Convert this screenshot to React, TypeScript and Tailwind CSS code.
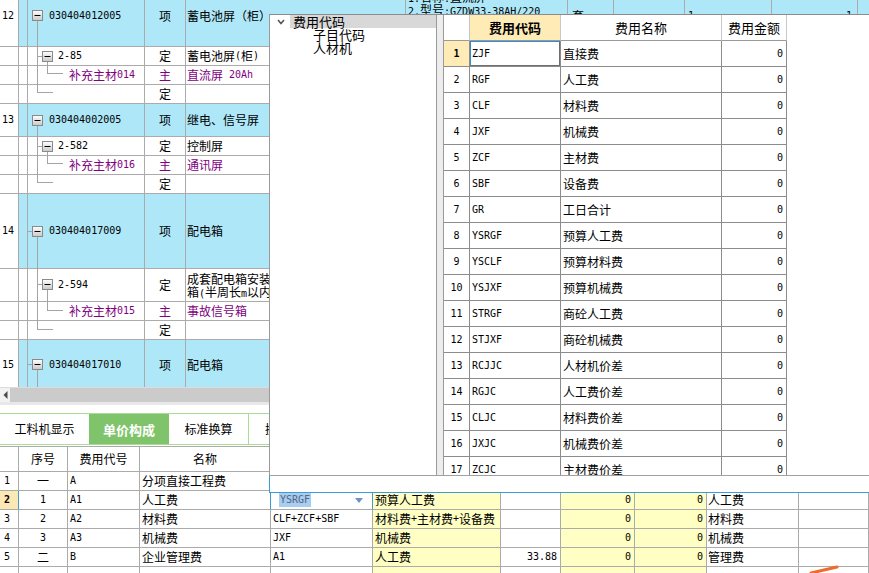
import React from "react";

const MONO = "font-['DejaVu_Sans_Mono',monospace] text-[10px]";

function M({ s }: { s: string }) {
  const parts = s.split(/([\x20-\x7E]+)/).filter((p) => p.length > 0);
  return (
    <>
      {parts.map((p, i) =>
        /^[\x20-\x7E]+$/.test(p) ? (
          <span key={i} className="font-['DejaVu_Sans_Mono',monospace] text-[10px] whitespace-pre">
            {p}
          </span>
        ) : (
          <span key={i}>{p}</span>
        )
      )}
    </>
  );
}

type TopRow = {
  h: string;
  kind: "item" | "def" | "main" | "blank";
  num?: string;
  code?: string;
  type: string;
  name?: string;
  name2?: string[];
  spec?: string[];
  unit?: string;
  q?: string;
};

const TOP_ROWS: TopRow[] = [
  {
    h: "h-[61px]",
    kind: "item",
    num: "12",
    code: "030404012005",
    type: "项",
    name: "蓄电池屏（柜）",
    spec: ["1.名称:直流屏", "2.型号:GZDW33-38AH/220", "", ""],
    unit: "套",
    q: "1",
  },
  { h: "h-[19px]", kind: "def", code: "2-85", type: "定", name: "蓄电池屏(柜)" },
  { h: "h-[19px]", kind: "main", code: "补充主材014", type: "主", name: "直流屏 20Ah" },
  { h: "h-[19px]", kind: "blank", type: "定" },
  { h: "h-[33px]", kind: "item", num: "13", code: "030404002005", type: "项", name: "继电、信号屏" },
  { h: "h-[19px]", kind: "def", code: "2-582", type: "定", name: "控制屏" },
  { h: "h-[19px]", kind: "main", code: "补充主材016", type: "主", name: "通讯屏" },
  { h: "h-[19px]", kind: "blank", type: "定" },
  { h: "h-[75px]", kind: "item", num: "14", code: "030404017009", type: "项", name: "配电箱" },
  { h: "h-[33px]", kind: "def", code: "2-594", type: "定", name2: ["成套配电箱安装 悬", "箱(半周长m以内)"] },
  { h: "h-[19px]", kind: "main", code: "补充主材015", type: "主", name: "事故信号箱" },
  { h: "h-[19px]", kind: "blank", type: "定" },
  { h: "h-[50px]", kind: "item", num: "15", code: "030404017010", type: "项", name: "配电箱" },
];

const CELL = "border-r border-b border-[#ababab] flex items-center overflow-hidden whitespace-nowrap";

function Box({ x, y }: { x: number; y: number }) {
  return (
    <g>
      <rect x={x + 0.5} y={y + 0.5} width={10} height={10} fill="url(#boxg)" stroke="#8a8a8a" />
      <line x1={x + 2.5} x2={x + 8.5} y1={y + 5.5} y2={y + 5.5} stroke="#000" />
    </g>
  );
}

function TreeLines() {
  const L = "#a4a4a4";
  return (
    <svg className="absolute left-0 top-0 pointer-events-none" width={145} height={387}>
      <defs>
        <linearGradient id="boxg" x1="0" y1="0" x2="0" y2="1">
          <stop offset="0" stopColor="#ffffff" />
          <stop offset="1" stopColor="#c8c8c8" />
        </linearGradient>
      </defs>
      <g stroke={L} strokeWidth={1} fill="none">
        <line x1={37.5} x2={37.5} y1={21} y2={93} />
        <line x1={37} x2={53} y1={92.5} y2={92.5} />
        <line x1={37} x2={42} y1={56.5} y2={56.5} />
        <line x1={47.5} x2={47.5} y1={62} y2={74} />
        <line x1={47} x2={63} y1={73.5} y2={73.5} />

        <line x1={37.5} x2={37.5} y1={126} y2={183} />
        <line x1={37} x2={53} y1={182.5} y2={182.5} />
        <line x1={37} x2={42} y1={146.5} y2={146.5} />
        <line x1={47.5} x2={47.5} y1={152} y2={164} />
        <line x1={47} x2={63} y1={163.5} y2={163.5} />

        <line x1={28} x2={32} y1={231.5} y2={231.5} />
        <line x1={37.5} x2={37.5} y1={237} y2={330} />
        <line x1={37} x2={53} y1={329.5} y2={329.5} />
        <line x1={37} x2={42} y1={284.5} y2={284.5} />
        <line x1={47.5} x2={47.5} y1={290} y2={311} />
        <line x1={47} x2={63} y1={310.5} y2={310.5} />

        <line x1={28} x2={32} y1={364.5} y2={364.5} />
        <line x1={37.5} x2={37.5} y1={370} y2={387} />
      </g>
      <Box x={32} y={10} />
      <Box x={42} y={51} />
      <Box x={32} y={115} />
      <Box x={42} y={141} />
      <Box x={32} y={226} />
      <Box x={42} y={279} />
      <Box x={32} y={359} />
    </svg>
  );
}

function TopGrid() {
  return (
    <div className="relative h-[387px] overflow-hidden">
      <div className="-mt-[14px]">
        {TOP_ROWS.map((r, i) => {
          const cy = r.kind === "item" ? "bg-[#aee8f8]" : "bg-white";
          const col = r.kind === "main" ? "text-[#800080]" : "text-black";
          const pl =
            r.kind === "item" ? "pl-[21px]" : r.kind === "def" ? "pl-[30px]" : r.kind === "main" ? "pl-[41px]" : "";
          return (
            <div
              key={i}
              className={`grid grid-cols-[19px_9px_117px_41px_220px_162px_46px_71px_87px_86px_11px] ${r.h}`}
            >
              <div className={`${CELL} bg-white pl-[2px]`}>
                {r.num && <span className={MONO}>{r.num}</span>}
              </div>
              <div className={`${CELL} ${cy}`} />
              <div className={`${CELL} ${cy} ${pl} ${col}`}>{r.code && <M s={r.code} />}</div>
              <div className={`${CELL} ${cy} justify-center ${col}`}>{r.type}</div>
              <div className={`${CELL} ${cy} pl-[1px] ${col}`}>
                {r.name && <M s={r.name} />}
                {r.name2 && (
                  <div className="flex flex-col leading-[13px]">
                    {r.name2.map((t, k) => (
                      <div key={k} className="h-[13px]">
                        <M s={t} />
                      </div>
                    ))}
                  </div>
                )}
              </div>
              <div className={`${CELL} ${cy} pl-[2px]`}>
                {r.spec && (
                  <div className="flex flex-col">
                    {r.spec.map((t, k) => (
                      <div key={k} className="h-[13px] leading-[13px]">
                        <M s={t} />
                      </div>
                    ))}
                  </div>
                )}
              </div>
              <div className={`${CELL} ${cy} pl-[4px]`}>{r.unit}</div>
              <div className={`${CELL} ${cy}`} />
              <div className={`${CELL} ${cy} pl-[3px]`}>{r.q && <span className={MONO}>{r.q}</span>}</div>
              <div className={`${CELL} ${cy} justify-end pr-[5px]`}>
                {r.q && <span className={MONO}>{r.q}</span>}
              </div>
              <div className={`border-b border-[#ababab] ${cy}`} />
            </div>
          );
        })}
      </div>
      <TreeLines />
    </div>
  );
}

function Scrollbar() {
  return (
    <div className="flex h-[15px] bg-[#cbcbcb] border-t border-[#dcdcdc]">
      <div className="w-[10px] h-full bg-[#f2f2f2] flex items-center justify-center">
        <svg width={5} height={8} viewBox="0 0 5 8">
          <polygon points="4.5,0 4.5,8 0.5,4" fill="#4a4a4a" />
        </svg>
      </div>
    </div>
  );
}

function Tabs() {
  return (
    <div className="flex h-[32px] border-t border-b border-[#a9dc95] bg-white">
      <div className="w-[89px] flex items-center justify-center text-[12px]">工料机显示</div>
      <div className="w-[80px] flex items-center justify-center bg-[#7fc46b] text-white font-bold text-[13px]">
        单价构成
      </div>
      <div className="w-[80px] flex items-center justify-center text-[12px] border-r border-[#a9dc95]">
        标准换算
      </div>
      <div className="w-[80px] flex items-center justify-center text-[12px]">换算信息</div>
    </div>
  );
}

const BCOLS = "grid grid-cols-[19px_49px_72px_131px_102px_128px_60px_74px_72px_92px_70px]";
const BALIGN = [
  "pl-[4px]",
  "justify-center",
  "pl-[2px]",
  "pl-[2px]",
  "pl-[2px]",
  "pl-[2px]",
  "justify-end pr-[3px]",
  "justify-end pr-[3px]",
  "justify-end pr-[3px]",
  "pl-[1px]",
  "",
];
const BYEL = [false, false, false, false, false, true, false, true, true, false, false];
const BHEAD = ["", "序号", "费用代号", "名称", "", "", "", "", "", "", ""];
const BROWS = [
  ["1", "一", "A", "分项直接工程费", "", "", "", "", "", "", ""],
  ["2", "1", "A1", "人工费", "YSRGF", "预算人工费", "", "0", "0", "人工费", ""],
  ["3", "2", "A2", "材料费", "CLF+ZCF+SBF", "材料费+主材费+设备费", "", "0", "0", "材料费", ""],
  ["4", "3", "A3", "机械费", "JXF", "机械费", "", "0", "0", "机械费", ""],
  ["5", "二", "B", "企业管理费", "A1", "人工费", "33.88", "0", "0", "管理费", ""],
  ["", "", "", "", "", "", "", "", "", "", ""],
];

function BottomGrid() {
  return (
    <div className="border-t border-[#ababab]">
      <div className={`${BCOLS} h-[25px]`}>
        {BHEAD.map((t, i) => (
          <div key={i} className={`${CELL} justify-center`}>
            <M s={t} />
          </div>
        ))}
      </div>
      {BROWS.map((row, ri) => (
        <div key={ri} className={`${BCOLS} h-[19px]`}>
          {row.map((t, ci) => {
            const sel = ri === 1;
            if (sel && ci === 4) {
              return (
                <div
                  key={ci}
                  className="border-r border-b border-[#ababab] border-r-[#3d9bd6] flex items-center justify-between pl-[8px] pr-[9px] bg-white"
                >
                  <span className="bg-[#a7cdf0] text-[#55647f] font-['DejaVu_Sans_Mono',monospace] text-[10px] px-[1px] leading-[14px]">
                    YSRGF
                  </span>
                  <svg width={8} height={5} viewBox="0 0 8 5">
                    <polygon points="0,0 8,0 4,5" fill="#6f93c2" />
                  </svg>
                </div>
              );
            }
            let extra = "";
            if (sel && ci === 0) extra = "bg-[#fce8b4] font-bold border-r-[#3d9bd6]";
            else if (BYEL[ci]) extra = "bg-[#ffffc4]";
            if (sel && ci === 3) extra += " border-r-[#3d9bd6]";
            return (
              <div key={ci} className={`${CELL} ${BALIGN[ci]} ${extra}`}>
                <M s={t} />
              </div>
            );
          })}
        </div>
      ))}
    </div>
  );
}

const PROWS: [string, string, string][] = [
  ["1", "ZJF", "直接费"],
  ["2", "RGF", "人工费"],
  ["3", "CLF", "材料费"],
  ["4", "JXF", "机械费"],
  ["5", "ZCF", "主材费"],
  ["6", "SBF", "设备费"],
  ["7", "GR", "工日合计"],
  ["8", "YSRGF", "预算人工费"],
  ["9", "YSCLF", "预算材料费"],
  ["10", "YSJXF", "预算机械费"],
  ["11", "STRGF", "商砼人工费"],
  ["12", "STJXF", "商砼机械费"],
  ["13", "RCJJC", "人材机价差"],
  ["14", "RGJC", "人工费价差"],
  ["15", "CLJC", "材料费价差"],
  ["16", "JXJC", "机械费价差"],
  ["17", "ZCJC", "主材费价差"],
];

const PCOLS = "grid grid-cols-[26px_91px_161px_65px_1fr]";
const PB = "border-r border-b border-[#8c8c8c] flex items-center whitespace-nowrap overflow-hidden";

function Popup() {
  return (
    <div className="absolute left-[269px] top-[14px] w-[600px] h-[479px] flex flex-col">
      <div className="h-[461px] flex border-t border-[#8c8c8c] overflow-hidden">
        <div className="w-[168px] h-full border-l border-r border-[#9a9a9a] bg-white text-[13px] leading-[13px]">
          <div className="flex h-[13px] items-center">
            <div className="w-[20px] h-full flex items-center pl-[7px]">
              <svg width={8} height={6} viewBox="0 0 8 6">
                <polyline points="1,1 4,4.5 7,1" fill="none" stroke="#555" strokeWidth={1.6} />
              </svg>
            </div>
            <div className="flex-1 h-full bg-[#d8d8d8] pl-[3px] leading-[13px]">费用代码</div>
          </div>
          <div className="h-[13px] pl-[43px]">子目代码</div>
          <div className="h-[13px] pl-[43px]">人材机</div>
        </div>
        <div className="w-[6px] h-full bg-[#ededed]" />
        <div className="flex-1 h-full border-l border-[#9a9a9a] bg-white overflow-hidden">
          <div className={`${PCOLS} h-[26px]`}>
            <div className="border-r border-b border-r-[#c8c8c8] border-b-[#9a9a9a]" />
            <div className="border-r border-b border-r-[#c8c8c8] border-b-[#9a9a9a] bg-[#feebb6] flex items-center justify-center font-bold text-[13px]">
              费用代码
            </div>
            <div className="border-r border-b border-r-[#c8c8c8] border-b-[#9a9a9a] flex items-center justify-center text-[13px]">
              费用名称
            </div>
            <div className="border-r border-b border-r-[#c8c8c8] border-b-[#9a9a9a] flex items-center justify-center text-[13px]">
              费用金额
            </div>
            <div />
          </div>
          {PROWS.map(([n, c, nm], i) => (
            <div key={i} className={`${PCOLS} h-[26px]`}>
              <div className={`${PB} justify-center ${i === 0 ? "bg-[#feebb6] font-bold" : ""}`}>
                <span className={MONO}>{n}</span>
              </div>
              <div className={`${PB} pl-[2px] relative`}>
                <span className={MONO}>{c}</span>
                {i === 0 && (
                  <div className="absolute -top-[1px] -left-[1px] right-[-1px] bottom-[-1px] border-t-2 border-l-2 border-[#2e8fd6] border-r-2 border-b-2 border-r-[#6e6e6e] border-b-[#6e6e6e]" />
                )}
              </div>
              <div className={`${PB} pl-[2px]`}>{nm}</div>
              <div className={`${PB} justify-end pr-[3px]`}>
                <span className={MONO}>0</span>
              </div>
              <div />
            </div>
          ))}
        </div>
      </div>
      <div className="h-[18px] bg-white border-t border-t-[#a0a0a0] border-l border-l-[#3d9bd6] border-b border-b-[#3d9bd6]" />
    </div>
  );
}

export default function App() {
  return (
    <div className="relative w-[869px] h-[573px] overflow-hidden bg-white text-black text-[12px] leading-none font-['Noto_Sans_CJK_SC',sans-serif]">
      <TopGrid />
      <Scrollbar />
      <div className="h-[3px] bg-[#e8e8e8]" />
      <div className="h-[8px]" />
      <Tabs />
      <div className="h-[1px]" />
      <BottomGrid />
      <Popup />
      <svg className="absolute left-[806px] top-[562px] pointer-events-none" width={36} height={11}>
        <line x1={5} y1={11} x2={31} y2={5} stroke="#f06a2c" strokeWidth={3} strokeLinecap="round" />
      </svg>
    </div>
  );
}
